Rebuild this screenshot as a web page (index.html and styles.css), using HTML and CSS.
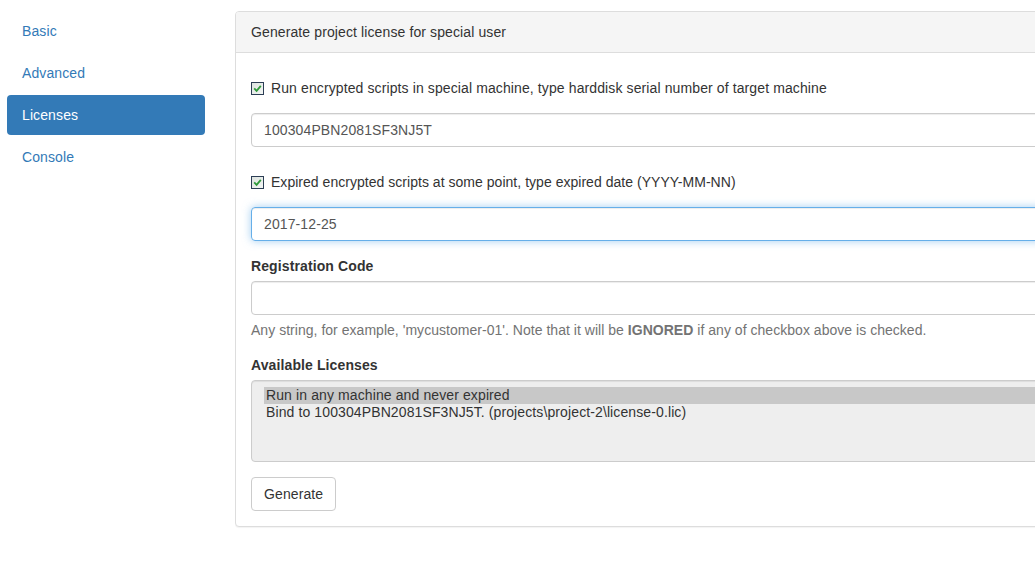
FILE: index.html
```html
<!DOCTYPE html>
<html lang="en">
<head>
<meta charset="utf-8">
<title>Licenses</title>
<link rel="stylesheet" href="styles.css">
</head>
<body>
<div class="layout">
  <nav class="sidebar">
    <a class="pill" href="#">Basic</a>
    <a class="pill" href="#">Advanced</a>
    <a class="pill active" href="#">Licenses</a>
    <a class="pill" href="#">Console</a>
  </nav>
  <main class="main">
    <section class="panel">
      <div class="panel-heading">Generate project license for special user</div>
      <div class="panel-body">
        <label class="check">
          <span class="box"><svg width="9" height="9" viewBox="0 0 9 9"><path d="M1.2 4.4 L3.6 6.8 L7.8 1.8" fill="none" stroke="#2f9a3a" stroke-width="1.8"/></svg></span>
          Run encrypted scripts in special machine, type harddisk serial number of target machine
        </label>
        <div class="input">100304PBN2081SF3NJ5T</div>
        <label class="check second">
          <span class="box"><svg width="9" height="9" viewBox="0 0 9 9"><path d="M1.2 4.4 L3.6 6.8 L7.8 1.8" fill="none" stroke="#2f9a3a" stroke-width="1.8"/></svg></span>
          Expired encrypted scripts at some point, type expired date (YYYY-MM-NN)
        </label>
        <div class="input focus">2017-12-25</div>
        <div class="group">
          <div class="label">Registration Code</div>
          <div class="input"></div>
          <p class="help">Any string, for example, 'mycustomer-01'. Note that it will be <b>IGNORED</b> if any of checkbox above is checked.</p>
        </div>
        <div class="group">
          <div class="label">Available Licenses</div>
          <div class="listbox">
            <div class="option selected">Run in any machine and never expired</div>
            <div class="option">Bind to 100304PBN2081SF3NJ5T. (projects\project-2\license-0.lic)</div>
          </div>
        </div>
        <button class="btn" type="button">Generate</button>
      </div>
    </section>
  </main>
</div>
</body>
</html>
```
FILE: styles.css
```css
html, body {
  margin: 0;
  padding: 0;
  overflow: hidden;
  background: #fff;
}
body {
  font-family: "Liberation Sans", Arial, sans-serif;
  font-size: 14px;
  line-height: 20px;
  letter-spacing: 0.11px;
  color: #333;
}
.layout {
  display: flex;
  align-items: flex-start;
  padding-top: 11px;
  padding-bottom: 4px;
}
.sidebar {
  flex: 0 0 198px;
  margin-left: 7px;
  display: flex;
  flex-direction: column;
  gap: 2px;
}
.pill {
  display: block;
  padding: 10px 15px;
  border-radius: 4px;
  color: #337ab7;
  text-decoration: none;
}
.pill.active {
  background: #337ab7;
  color: #fff;
}
.main {
  flex: 1 1 auto;
  min-width: 0;
  margin-left: 30px;
  overflow: hidden;
  padding-bottom: 2px;
}
.panel {
  width: 860px;
  border: 1px solid #ddd;
  border-radius: 4px;
  background: #fff;
  box-shadow: 0 1px 1px rgba(0,0,0,.05);
}
.panel-heading {
  background: #f5f5f5;
  border-bottom: 1px solid #ddd;
  padding: 10px 15px;
  border-radius: 3px 3px 0 0;
}
.panel-body {
  padding: 15px;
}
.check {
  display: flex;
  align-items: center;
  padding-left: 20px;
  position: relative;
  margin: 10px 0 15px;
}
.check.second {
  margin-top: 25px;
  letter-spacing: 0.03px;
}
.box {
  position: absolute;
  left: 0;
  top: 4px;
  width: 11px;
  height: 11px;
  border: 1px solid #2c3e55;
  background: linear-gradient(135deg, #dde3df, #f3f6f4);
  display: flex;
  align-items: center;
  justify-content: center;
}
.input {
  box-sizing: border-box;
  height: 34px;
  padding: 6px 12px;
  border: 1px solid #ccc;
  border-radius: 4px;
  color: #555;
  box-shadow: inset 0 1px 1px rgba(0,0,0,.075);
}
.input.focus {
  border-color: #66afe9;
  box-shadow: inset 0 1px 1px rgba(0,0,0,.075), 0 0 8px rgba(102,175,233,.6);
}
.group {
  margin-top: 15px;
}
.label {
  font-weight: bold;
  margin-bottom: 5px;
}
.help {
  margin: 5px 0 0;
  color: #737373;
  letter-spacing: 0.03px;
}
.group + .group {
  margin-top: 15px;
}
.listbox {
  box-sizing: border-box;
  height: 82px;
  padding: 6px 12px;
  border: 1px solid #ccc;
  border-radius: 4px;
  background: #eee;
  color: #333;
  box-shadow: inset 0 1px 1px rgba(0,0,0,.075);
}
.option {
  line-height: 17px;
  padding: 0 2px;
}
.option.selected {
  background: #c8c8c8;
}
.btn {
  margin-top: 15px;
  font: inherit;
  letter-spacing: inherit;
  color: #333;
  background: #fff;
  border: 1px solid #ccc;
  border-radius: 4px;
  padding: 6px 12px;
  line-height: 20px;
  cursor: pointer;
}
```
